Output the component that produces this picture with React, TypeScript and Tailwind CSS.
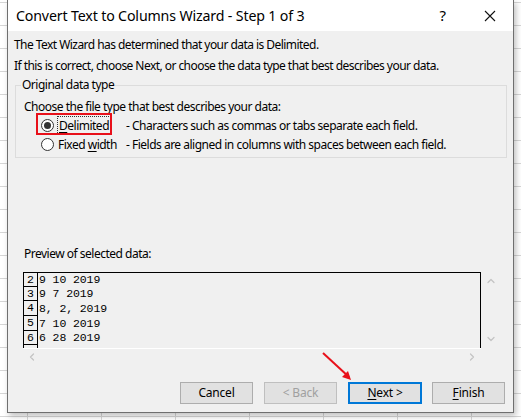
import { ChevronUp, ChevronDown, ChevronLeft, ChevronRight } from 'lucide-react'

const UI_FONT = "font-['Noto_Sans',sans-serif]"

const rows = [
  { num: '2', text: '9 10 2019', h: 'h-[14px]' },
  { num: '3', text: '9 7 2019', h: 'h-[14px]' },
  { num: '4', text: '8, 2, 2019', h: 'h-[15px]' },
  { num: '5', text: '7 10 2019', h: 'h-[15px]' },
  { num: '6', text: '6 28 2019', h: 'h-[14px]' },
]

const Radio = ({ checked }: { checked: boolean }) => (
  <span className="flex h-[13px] w-[13px] shrink-0 items-center justify-center rounded-full border border-[#333] bg-white">
    {checked && <span className="h-[7px] w-[7px] rounded-full bg-[#333]" />}
  </span>
)

const Button = ({
  children,
  disabled,
  focused,
}: {
  children: React.ReactNode
  disabled?: boolean
  focused?: boolean
}) => (
  <div
    className={
      focused
        ? 'flex h-[22px] w-[74px] items-center justify-center border-2 border-[#0078d7] bg-[#e1e1e1] text-[12px] text-black'
        : disabled
          ? 'flex h-[22px] w-[73px] items-center justify-center border border-[#bfbfbf] bg-[#e1e1e1] text-[12px] text-[#a0a0a0]'
          : 'flex h-[22px] w-[73px] items-center justify-center border border-[#adadad] bg-[#e1e1e1] text-[12px] text-black'
    }
  >
    {children}
  </div>
)

export default function App() {
  return (
    <div className="h-[420px] w-[521px] overflow-hidden bg-white bg-[linear-gradient(#d6d6d6_1px,transparent_1px),linear-gradient(90deg,#d6d6d6_1px,transparent_1px)] bg-[size:74px_23px] bg-[position:27px_2px] pl-[7px]">
      <div
        className={`relative flex h-[413px] w-[507px] flex-col border-x border-b border-[#6f6f6f] bg-[#f0f0f0] shadow-[2px_3px_6px_rgba(0,0,0,0.25)] ${UI_FONT} text-black`}
      >
        {/* title bar */}
        <div className="flex h-[31px] items-center bg-white pl-[8px] pr-[16px]">
          <span className="text-[14.2px] tracking-[-0.15px]">Convert Text to Columns Wizard - Step 1 of 3</span>
          <span className="ml-auto mr-[38px] text-[15px]">?</span>
          <svg width="12" height="12" viewBox="0 0 12 12" className="mr-[1px]">
            <path d="M1 1 L11 11 M11 1 L1 11" stroke="#111" strokeWidth="1.1" />
          </svg>
        </div>

        <div className="flex flex-col pl-[6px] text-[12px] tracking-[-0.55px]">
          <p className="mt-[6px] h-[16px] leading-[16px]">The Text Wizard has determined that your data is Delimited.</p>
          <p className="mt-[5px] h-[16px] leading-[16px]">
            If this is correct, choose Next, or choose the data type that best describes your data.
          </p>
        </div>

        {/* group box */}
        <div className="relative ml-[7px] mt-[11px] h-[73px] w-[492px] border border-[#dcdcdc] text-[12px] tracking-[-0.5px]">
          <span className="absolute -top-[9px] left-[5px] bg-[#f0f0f0] px-[1px] leading-[16px]">Original data type</span>
          <p className="ml-[8px] mt-[13px] leading-[16px]">Choose the file type that best describes your data:</p>
          <div className="ml-[25px] mt-[1px] flex h-[19px] items-center">
            <Radio checked />
            <span className="ml-[3px] w-[69px]">
              <span className="inline-flex h-[19px] items-center border border-dotted border-[#333] px-[1px]">
                <span className="underline underline-offset-2">D</span>elimited
              </span>
            </span>
            <span>- Characters such as commas or tabs separate each field.</span>
          </div>
          <div className="ml-[25px] flex h-[19px] items-center">
            <Radio checked={false} />
            <span className="ml-[4px] w-[68px]">
              Fixed <span className="underline underline-offset-2">w</span>idth
            </span>
            <span>- Fields are aligned in columns with spaces between each field.</span>
          </div>
          {/* annotation */}
          <div className="absolute left-[20px] top-[27px] h-[22px] w-[76px] border-2 border-[#e8101a]" />
        </div>

        <p className="ml-[16px] mt-[88px] text-[12px] leading-[16px] tracking-[-0.5px]">Preview of selected data:</p>

        {/* preview */}
        <div className="ml-[15px] mt-[10px] flex">
          <div className="flex h-[76px] w-[458px] border-l border-r border-t border-black border-b-0 font-['Liberation_Mono',monospace] text-[11.5px] tracking-[-0.1px]">
            <div className="flex w-[14px] flex-col border-r border-black">
              {rows.map((r) => (
                <div key={r.num} className={`${r.h} flex items-center justify-center border-b border-black leading-none`}>
                  {r.num}
                </div>
              ))}
            </div>
            <div className="flex flex-col">
              {rows.map((r) => (
                <div key={r.num} className={`${r.h} flex items-center whitespace-pre pl-[1px] leading-none`}>
                  {r.text}
                </div>
              ))}
            </div>
          </div>
          <div className="flex h-[76px] w-[19px] flex-col items-center justify-between py-[3px] text-[#c4c4c4]">
            <ChevronUp size={12} strokeWidth={2.5} />
            <ChevronDown size={12} strokeWidth={2.5} />
          </div>
        </div>
        <div className="ml-[15px] flex h-[17px] w-[458px] items-center justify-between border-t border-white px-[3px] text-[#c4c4c4]">
          <ChevronLeft size={12} strokeWidth={2.5} />
          <ChevronRight size={12} strokeWidth={2.5} />
        </div>

        {/* buttons */}
        <div className={`mt-[17px] flex gap-[11px] pl-[172px] ${UI_FONT} tracking-[-0.2px]`}>
          <Button>Cancel</Button>
          <Button disabled>&lt; Back</Button>
          <Button focused>
            <span>
              <span className="underline underline-offset-2">N</span>ext &gt;
            </span>
          </Button>
          <div className="-ml-[1px]">
            <Button>
              <span>
                <span className="underline underline-offset-2">F</span>inish
              </span>
            </Button>
          </div>
        </div>

        {/* annotation arrow */}
        <svg className="absolute left-[310px] top-[350px]" width="46" height="36" viewBox="0 0 46 36">
          <line x1="5" y1="3" x2="31" y2="27" stroke="#e8101a" strokeWidth="2" />
          <path d="M33 30 L24 27 L30 21 Z" fill="#e8101a" />
        </svg>
      </div>
    </div>
  )
}
